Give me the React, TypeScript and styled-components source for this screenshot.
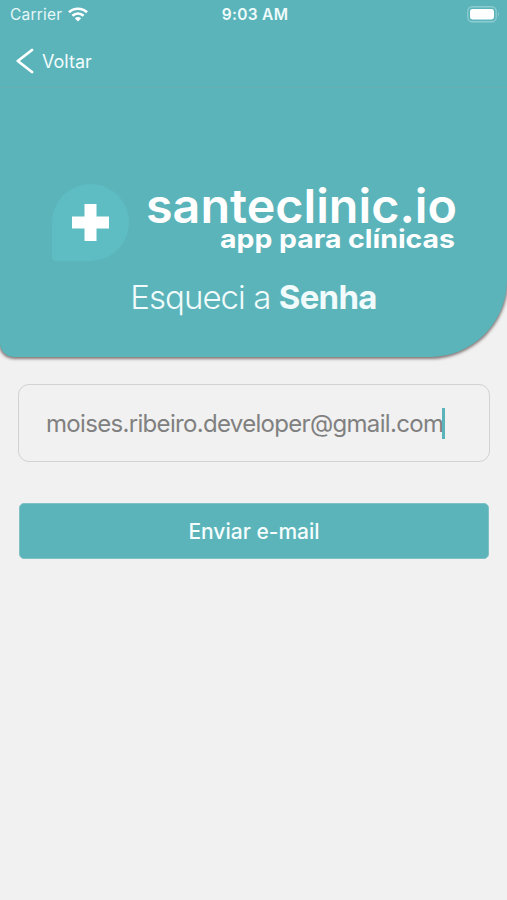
import React from "react";
import styled, { createGlobalStyle } from "styled-components";

const teal = "#5bb4ba";

const GlobalStyle = createGlobalStyle`
  *, *::before, *::after { box-sizing: border-box; }
  body { margin: 0; background: #f1f1f1; font-family: Inter, "Liberation Sans", sans-serif; }
`;

const Screen = styled.main`
  width: 507px;
  height: 900px;
  background: #f1f1f1;
  overflow: hidden;
`;

const Hero = styled.header`
  height: 357px;
  background: ${teal};
  border-radius: 0 0 77px 14px;
  box-shadow: 0 1px 3px 1px rgba(60, 40, 40, 0.6);
  color: #fff;
`;

const StatusBar = styled.div`
  display: grid;
  grid-template-columns: 1fr auto 1fr;
  align-items: center;
  height: 30px;
  padding: 0 7px 2px 10px;
`;

const Carrier = styled.div`
  display: flex;
  align-items: center;
  gap: 6px;
  font-size: 15.5px;
  letter-spacing: 0.2px;
  color: #e6f7f8;
`;

const Clock = styled.div`
  font-size: 15.5px;
  font-weight: 600;
  letter-spacing: 0.3px;
  color: #effbfb;
`;

const BatterySlot = styled.div`
  display: flex;
  justify-content: flex-end;
`;

const NavBar = styled.nav`
  height: 58px;
  padding: 2px 16px 0;
  border-bottom: 1px solid #67b0b4;
`;

const BackButton = styled.button`
  display: flex;
  align-items: center;
  gap: 8px;
  height: 58px;
  padding: 0;
  border: 0;
  background: none;
  color: #f2fcfc;
  font: 400 18px Inter, sans-serif;
`;

const Brand = styled.div`
  padding: 92px 0 0 48px;
  height: 180px;
`;

const WordMark = styled.text`
  font-family: Inter, sans-serif;
  fill: #fff;
`;

const Title = styled.h1`
  margin: 8px 0 0;
  text-align: center;
  font-size: 33px;
  line-height: 42px;
  font-weight: 300;
  letter-spacing: -0.95px;
  color: #f1fbfb;
  strong { font-weight: 700; letter-spacing: -0.7px; }
`;

const Form = styled.form`
  display: flex;
  flex-direction: column;
  gap: 41px;
  padding: 27px 17px 0 18px;
`;

const Field = styled.label`
  display: flex;
  align-items: center;
  height: 78px;
  padding-left: 27px;
  border: 1.5px solid #d2d2d2;
  border-radius: 11px;
  color: #808080;
  font-size: 24px;
  letter-spacing: -0.68px;
`;

const Value = styled.span`
  white-space: nowrap;
`;

const Caret = styled.span`
  width: 3px;
  height: 31px;
  margin-left: -1px;
  background: ${teal};
`;

const Submit = styled.button`
  height: 56px;
  margin: 0 1px;
  border: 1px solid #7fc1c5;
  border-radius: 5px;
  background: ${teal};
  color: #f5fdfd;
  font: 500 21px Inter, sans-serif;
`;

const WifiIcon = () => (
  <svg width="20" height="15" viewBox="0 0 20 15" fill="none" stroke="#fff" strokeWidth="2.7">
    <path d="M1 5.2C6 .6 14 .6 19 5.2" />
    <path d="M4.4 8.8C7.7 5.8 12.3 5.8 15.6 8.8" />
    <path d="M10 14.4 6.8 11.2Q10 8.6 13.2 11.2Z" fill="#fff" stroke="none" />
  </svg>
);

const BatteryIcon = () => (
  <svg width="33" height="17" viewBox="0 0 33 17">
    <rect x=".75" y=".75" width="28.5" height="15" rx="4.5" fill="none" stroke="#8ccbd0" strokeWidth="1.3" />
    <rect x="3" y="3" width="24" height="10.5" rx="2.4" fill="#fff" />
    <path d="M31 5.7Q33 8.2 31 10.8Z" fill="#8ccbd0" />
  </svg>
);

const Logo = () => (
  <svg width="412" height="88" viewBox="0 0 412 88" role="img">
    <path d="M4 77V42.5A38.5 38.5 0 1 1 42.5 81H8Q4 81 4 77Z" fill="#5ebdc2" />
    <path d="M36.5 24h12v12.5h12.5v12h-12.5v12.5h-12v-12.5H24v-12h12.5Z" fill="#fff" />
    <WordMark x="98" y="43" fontSize="47" fontWeight="600" textLength="311" lengthAdjust="spacingAndGlyphs">
      santeclinic.io
    </WordMark>
    <WordMark x="172" y="68" fontSize="25.5" fontWeight="700" textLength="235" lengthAdjust="spacingAndGlyphs">
      app para clínicas
    </WordMark>
  </svg>
);

export default function App() {
  return (
    <Screen>
      <GlobalStyle />
      <Hero>
        <StatusBar>
          <Carrier>
            Carrier
            <WifiIcon />
          </Carrier>
          <Clock>9:03 AM</Clock>
          <BatterySlot>
            <BatteryIcon />
          </BatterySlot>
        </StatusBar>
        <NavBar>
          <BackButton type="button">
            <svg width="18" height="26" viewBox="0 0 18 26" fill="none" stroke="#fff" strokeWidth="2.8" strokeLinecap="round" strokeLinejoin="round">
              <path d="M16 2 1.8 13 16 24" />
            </svg>
            Voltar
          </BackButton>
        </NavBar>
        <Brand>
          <Logo />
        </Brand>
        <Title>
          Esqueci a <strong>Senha</strong>
        </Title>
      </Hero>
      <Form>
        <Field>
          <Value>moises.ribeiro.developer@gmail.com</Value>
          <Caret />
        </Field>
        <Submit type="button">Enviar e-mail</Submit>
      </Form>
    </Screen>
  );
}
